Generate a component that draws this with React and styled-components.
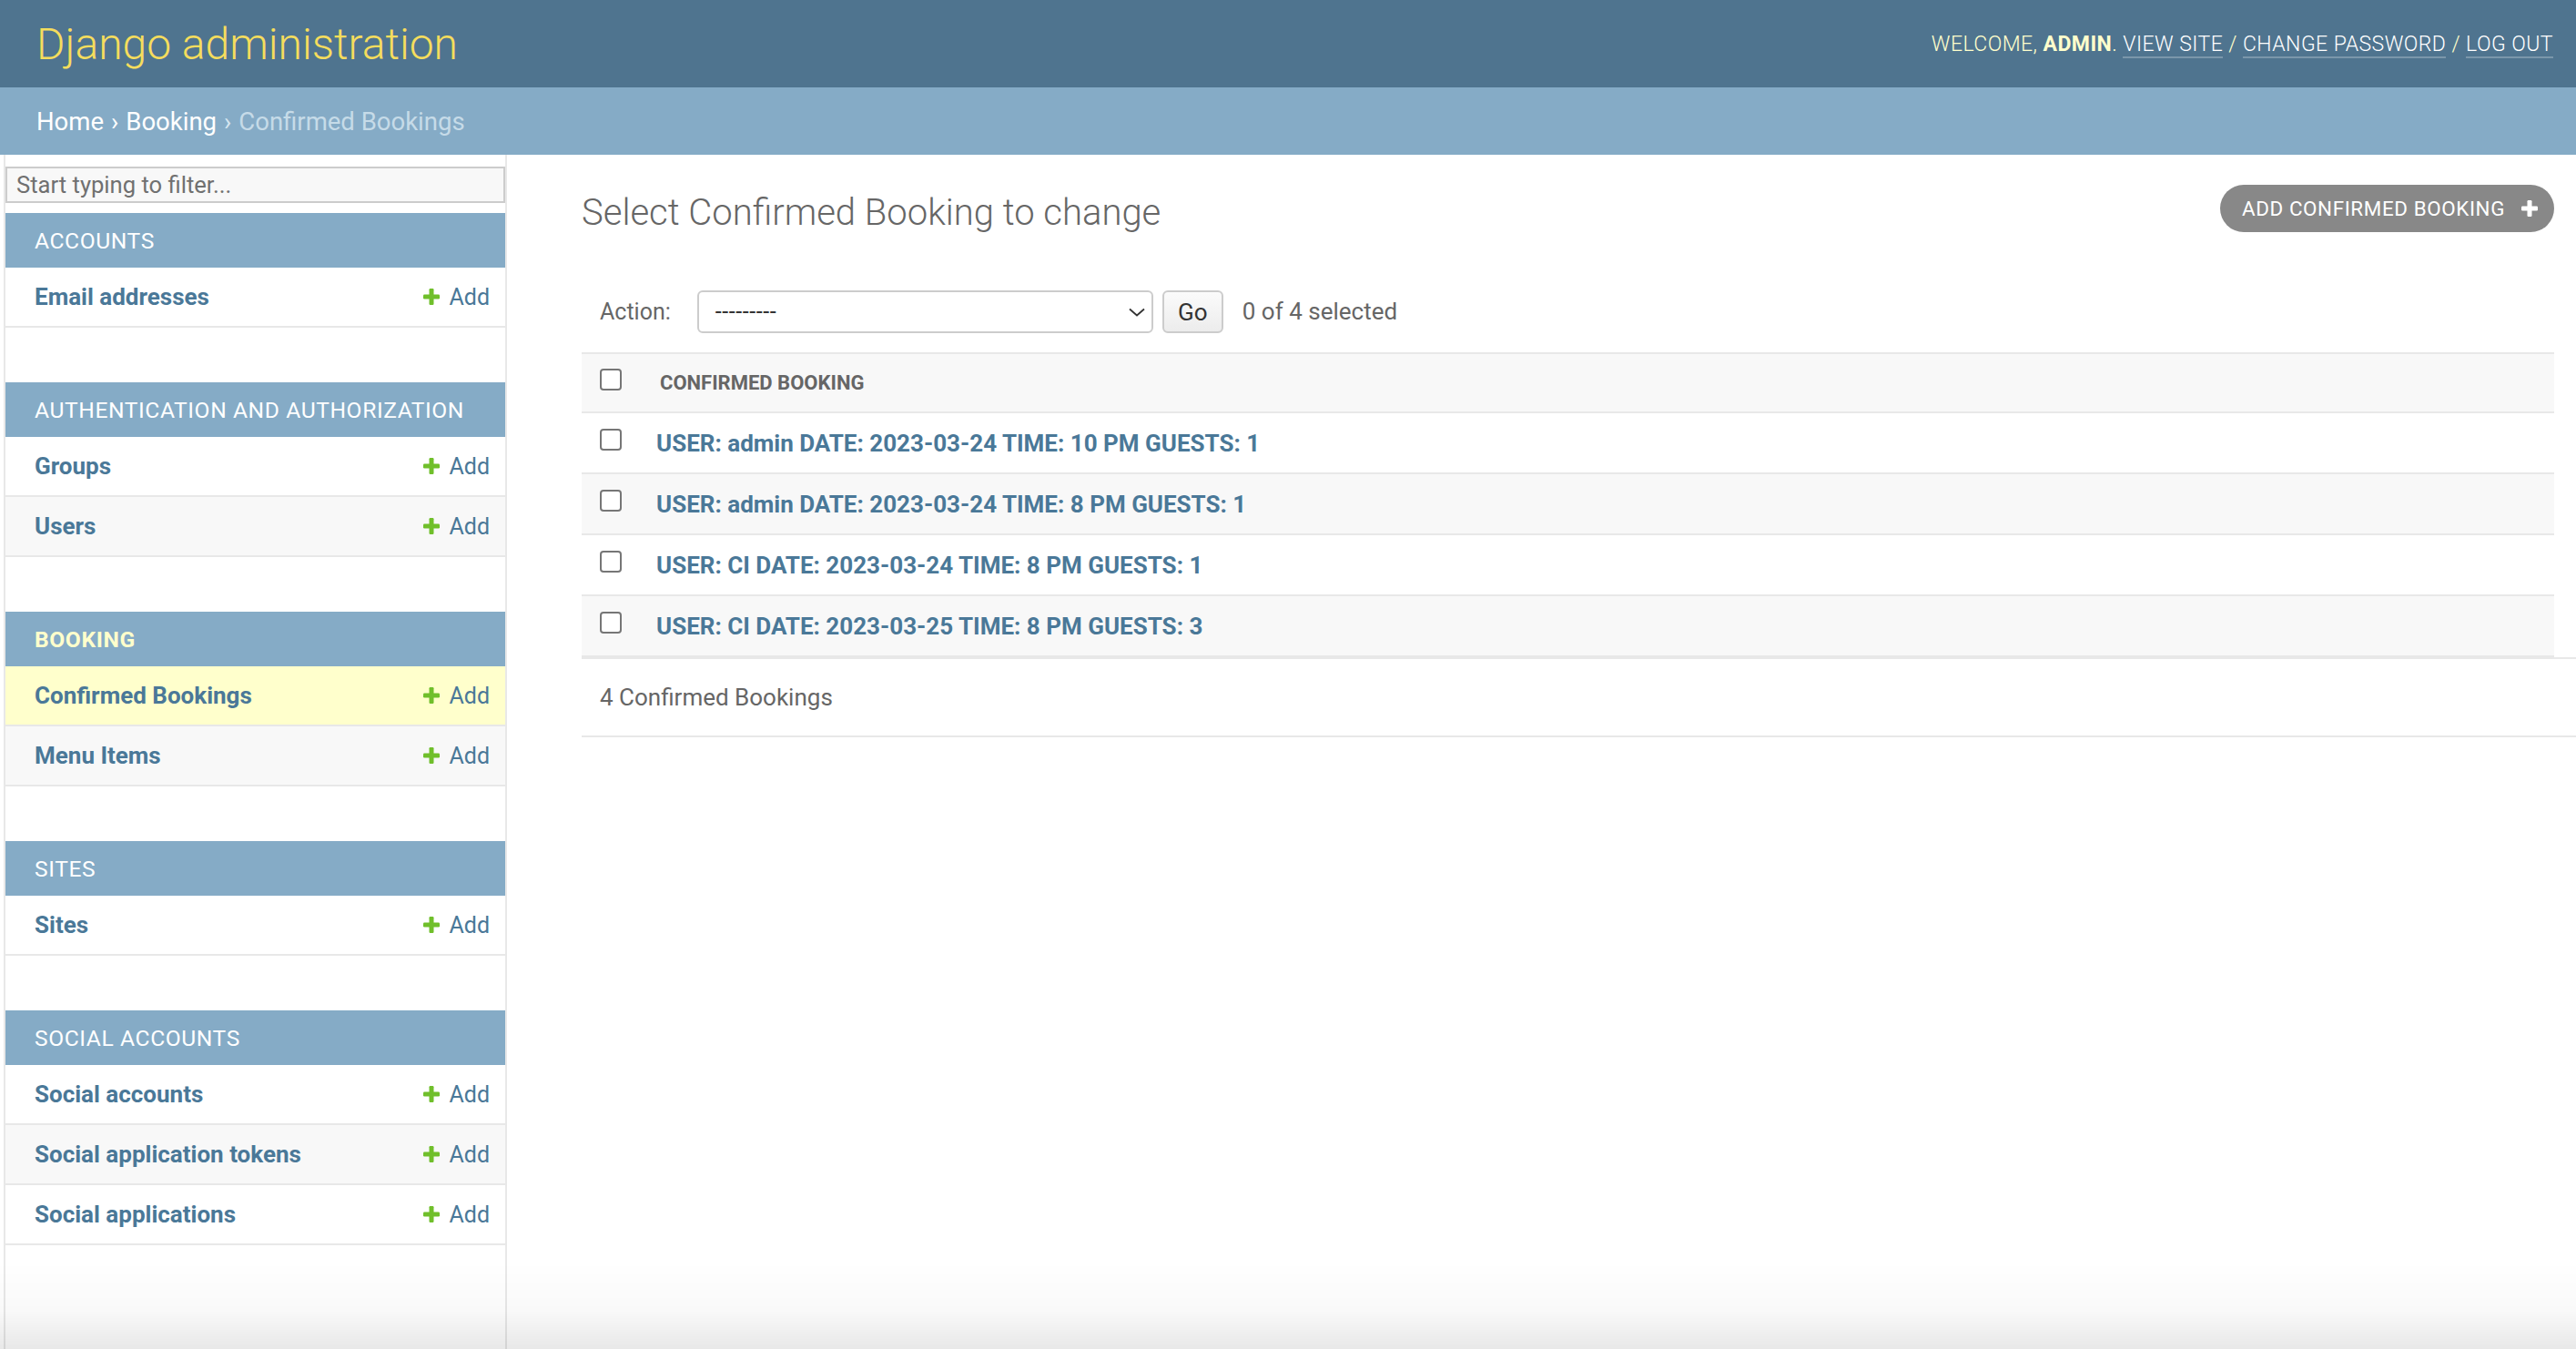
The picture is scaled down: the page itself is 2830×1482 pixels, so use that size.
import React from "react";
import styled, { createGlobalStyle } from "styled-components";

const LINK = "#4a7898";
const HAIRLINE = "#e8e8e8";

const GlobalStyle = createGlobalStyle`
  html, body {
    margin: 0;
    padding: 0;
    background: #fff;
  }
  body {
    font-family: Roboto, "Liberation Sans", Arial, sans-serif;
    color: #333;
  }
  * { box-sizing: border-box; }
`;

const Page = styled.div`
  min-height: 100vh;
  display: flex;
  flex-direction: column;
`;

const Header = styled.header`
  height: 96px;
  flex-shrink: 0;
  background: #4f748f;
  display: flex;
  align-items: center;
  justify-content: space-between;
  padding: 0 25px 0 40px;
`;

const Branding = styled.h1`
  margin: 2px 0 0;
  font-size: 48px;
  font-weight: 300;
  line-height: 1;
  color: #f5dd5d;
`;

const UserTools = styled.div`
  font-size: 23px;
  font-weight: 300;
  letter-spacing: 0.45px;
  text-transform: uppercase;
  color: #ffc;

  strong { font-weight: 700; }
`;

const ToolLink = styled.a`
  color: #fff;
  text-decoration: none;
  border-bottom: 2px solid rgba(255, 255, 255, 0.25);
`;

const Breadcrumbs = styled.nav`
  height: 74px;
  flex-shrink: 0;
  background: #85abc6;
  display: flex;
  align-items: center;
  padding-left: 40px;
  font-size: 27.5px;
  color: #fff;
`;

const Crumb = styled.a`
  color: ${(p) => (p.$current ? "#c6dbe8" : "#fff")};
  text-decoration: none;
`;

const Sep = styled.span`
  margin: 0 8px;
  color: ${(p) => (p.$dim ? "#d6e6f0" : "#fff")};
`;

const Main = styled.div`
  flex: 1;
  display: flex;
`;

const EdgeStrip = styled.div`
  width: 6px;
  flex-shrink: 0;
  border-right: 2px solid ${HAIRLINE};
`;

const Sidebar = styled.aside`
  width: 551px;
  flex-shrink: 0;
  border-right: 2px solid ${HAIRLINE};
`;

const FilterInput = styled.input`
  display: block;
  width: 100%;
  height: 40px;
  margin: 13px 0 11px;
  padding: 0 10px;
  background: #f8f8f8;
  border: 2px solid #ccc;
  font-family: inherit;
  font-size: 25.6px;
  color: #333;
  outline: none;

  &::placeholder { color: #707070; }
`;

const Module = styled.div`
  margin-bottom: 60px;
`;

const Caption = styled.div`
  height: 60px;
  background: #85abc6;
  display: flex;
  align-items: center;
  padding-left: 32px;
  font-size: 24.6px;
  letter-spacing: 0.6px;
  text-transform: uppercase;
  color: ${(p) => (p.$current ? "#ffc" : "#fff")};
  font-weight: ${(p) => (p.$current ? 700 : 400)};
`;

const ModelRow = styled.div`
  height: 66px;
  border-bottom: 2px solid ${HAIRLINE};
  display: flex;
  align-items: center;
  justify-content: space-between;
  padding: 0 17px 0 32px;
  background: ${(p) => (p.$current ? "#ffc" : p.$alt ? "#f8f8f8" : "#fff")};
`;

const ModelName = styled.a`
  font-size: 26px;
  font-weight: 700;
  color: ${LINK};
  text-decoration: none;
`;

const AddLink = styled.a`
  display: flex;
  align-items: center;
  gap: 9px;
  font-size: 25px;
  color: ${LINK};
  text-decoration: none;
`;

const Content = styled.main`
  flex: 1;
  padding: 33px 24px 0 82px;
`;

const ContentHead = styled.div`
  height: 52px;
  display: flex;
  align-items: center;
  justify-content: space-between;
`;

const Title = styled.h1`
  margin: 8px 0 0;
  font-size: 40px;
  font-weight: 300;
  color: #666;
`;

const AddButton = styled.a`
  height: 52px;
  display: flex;
  align-items: center;
  gap: 17px;
  padding: 0 17px 0 24px;
  border-radius: 26px;
  background: #888;
  color: #fff;
  font-size: 22.4px;
  letter-spacing: 0.6px;
  text-transform: uppercase;
  text-decoration: none;
`;

const Actions = styled.div`
  margin-top: 64px;
  height: 47px;
  display: flex;
  align-items: center;
  padding-left: 20px;
`;

const ActionLabel = styled.span`
  font-size: 25px;
  color: #666;
  margin-right: 29px;
`;

const SelectBox = styled.div`
  width: 501px;
  height: 47px;
  border: 2px solid #ccc;
  border-radius: 6px;
  display: flex;
  align-items: center;
  justify-content: space-between;
  padding: 0 7px 0 18px;
  font-size: 25px;
  letter-spacing: 0.6px;
  color: #333;
`;

const GoButton = styled.button`
  margin-left: 10px;
  width: 67px;
  height: 47px;
  border: 2px solid #ccc;
  border-radius: 6px;
  background: linear-gradient(#fbfbfb, #ececec);
  font-family: inherit;
  font-size: 26px;
  color: #333;
  padding: 0;
`;

const Counter = styled.span`
  margin-left: 21px;
  margin-bottom: 2px;
  font-size: 26px;
  color: #666;
`;

const Results = styled.div`
  margin-top: 21px;
  border-top: 2px solid ${HAIRLINE};
`;

const HeadRow = styled.div`
  height: 65px;
  background: #f8f8f8;
  border-bottom: 2px solid ${HAIRLINE};
  display: flex;
  align-items: center;
  padding-left: 20px;
`;

const HeadLabel = styled.span`
  margin-left: 42px;
  font-size: 22px;
  font-weight: 700;
  color: #666;
  text-transform: uppercase;
`;

const ResultRow = styled.div`
  height: 67px;
  background: ${(p) => (p.$alt ? "#f8f8f8" : "#fff")};
  border-bottom: 2px solid ${HAIRLINE};
  display: flex;
  align-items: center;
  padding-left: 20px;
`;

const ResultLink = styled.a`
  margin-left: 38px;
  font-size: 26px;
  font-weight: 700;
  color: ${LINK};
  text-decoration: none;
`;

const Checkbox = styled.span`
  width: 24px;
  height: 24px;
  flex-shrink: 0;
  margin-bottom: 7px;
  border: 2px solid #767676;
  border-radius: 4px;
  background: #fff;
`;

const Paginator = styled.div`
  margin-right: -24px;
  height: 88px;
  border-top: 2px solid ${HAIRLINE};
  border-bottom: 2px solid ${HAIRLINE};
  display: flex;
  align-items: center;
  padding-left: 20px;
  font-size: 26px;
  color: #666;
`;

const BottomShade = styled.div`
  position: fixed;
  left: 0;
  right: 0;
  bottom: 0;
  height: 95px;
  pointer-events: none;
  background: linear-gradient(
    to bottom,
    rgba(0, 0, 0, 0) 0%,
    rgba(0, 0, 0, 0.025) 55%,
    rgba(0, 0, 0, 0.09) 100%
  );
`;

const PlusIcon = ({ color = "#70bf2b", size = 20 }) => (
  <svg width={size} height={size} viewBox="0 0 20 20">
    <rect x="7.5" y="1" width="5" height="18" rx="1.2" fill={color} />
    <rect x="1" y="7.5" width="18" height="5" rx="1.2" fill={color} />
  </svg>
);

const Chevron = () => (
  <svg width="18" height="10" viewBox="0 0 18 10">
    <path d="M1 1.5 L9 8.5 L17 1.5" fill="none" stroke="#333" strokeWidth="1.8" />
  </svg>
);

const modules = [
  { name: "Accounts", models: ["Email addresses"] },
  { name: "Authentication and Authorization", models: ["Groups", "Users"] },
  { name: "Booking", current: true, models: ["Confirmed Bookings", "Menu Items"] },
  { name: "Sites", models: ["Sites"] },
  {
    name: "Social Accounts",
    models: ["Social accounts", "Social application tokens", "Social applications"],
  },
];

const bookings = [
  "USER: admin DATE: 2023-03-24 TIME: 10 PM GUESTS: 1",
  "USER: admin DATE: 2023-03-24 TIME: 8 PM GUESTS: 1",
  "USER: CI DATE: 2023-03-24 TIME: 8 PM GUESTS: 1",
  "USER: CI DATE: 2023-03-25 TIME: 8 PM GUESTS: 3",
];

export default function App() {
  return (
    <Page>
      <GlobalStyle />
      <Header>
        <Branding>Django administration</Branding>
        <UserTools>
          Welcome, <strong>admin</strong>. <ToolLink href="#">View site</ToolLink> /{" "}
          <ToolLink href="#">Change password</ToolLink> / <ToolLink href="#">Log out</ToolLink>
        </UserTools>
      </Header>

      <Breadcrumbs>
        <Crumb href="#">Home</Crumb>
        <Sep>›</Sep>
        <Crumb href="#">Booking</Crumb>
        <Sep $dim>›</Sep>
        <Crumb $current>Confirmed Bookings</Crumb>
      </Breadcrumbs>

      <Main>
        <EdgeStrip />
        <Sidebar>
          <FilterInput placeholder="Start typing to filter..." />
          {modules.map((m) => (
            <Module key={m.name}>
              <Caption $current={m.current}>{m.name}</Caption>
              {m.models.map((model, i) => (
                <ModelRow
                  key={model}
                  $alt={i % 2 === 1}
                  $current={model === "Confirmed Bookings"}
                >
                  <ModelName href="#">{model}</ModelName>
                  <AddLink href="#">
                    <PlusIcon />
                    Add
                  </AddLink>
                </ModelRow>
              ))}
            </Module>
          ))}
        </Sidebar>

        <Content>
          <ContentHead>
            <Title>Select Confirmed Booking to change</Title>
            <AddButton href="#">
              Add Confirmed Booking
              <PlusIcon color="#fff" />
            </AddButton>
          </ContentHead>

          <Actions>
            <ActionLabel>Action:</ActionLabel>
            <SelectBox>
              <span>---------</span>
              <Chevron />
            </SelectBox>
            <GoButton>Go</GoButton>
            <Counter>0 of 4 selected</Counter>
          </Actions>

          <Results>
            <HeadRow>
              <Checkbox />
              <HeadLabel>Confirmed Booking</HeadLabel>
            </HeadRow>
            {bookings.map((b, i) => (
              <ResultRow key={b} $alt={i % 2 === 1}>
                <Checkbox />
                <ResultLink href="#">{b}</ResultLink>
              </ResultRow>
            ))}
          </Results>
          <Paginator>4 Confirmed Bookings</Paginator>
        </Content>
      </Main>
      <BottomShade />
    </Page>
  );
}
